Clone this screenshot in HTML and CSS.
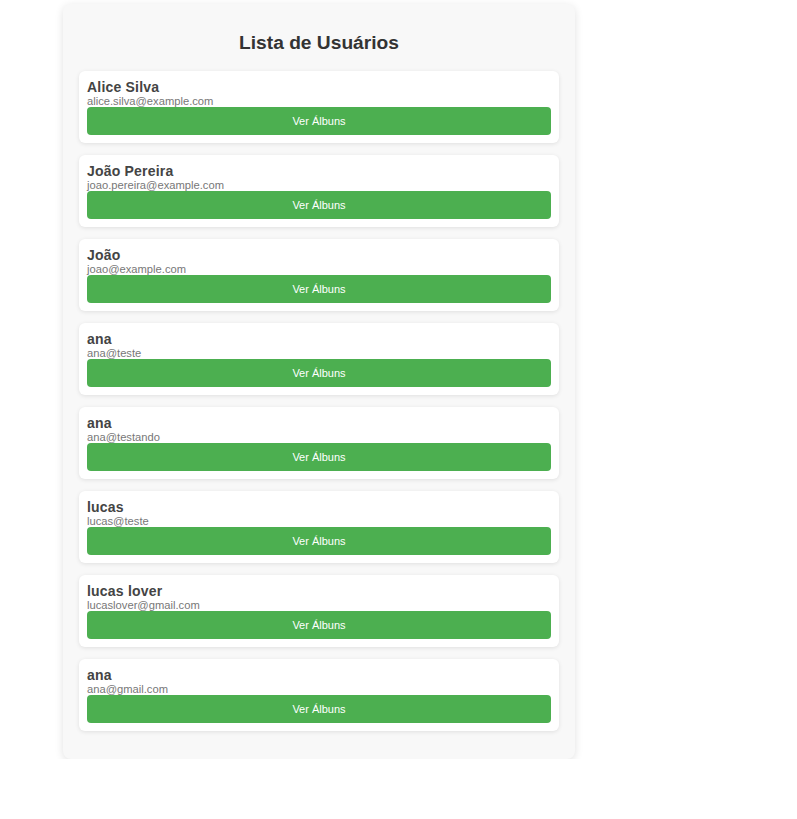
FILE: index.html
```html
<!DOCTYPE html>
<html lang="pt-BR">
<head>
<meta charset="utf-8">
<title>Lista de Usuários</title>
<link rel="stylesheet" href="styles.css">
</head>
<body>
<div class="container">
  <h2 class="title">Lista de Usuários</h2>
  <ul class="user-list">
    <li class="user-card"><div class="user-name">Alice Silva</div><div class="user-email">alice.silva@example.com</div><button class="btn">Ver Álbuns</button></li>
    <li class="user-card"><div class="user-name">João Pereira</div><div class="user-email">joao.pereira@example.com</div><button class="btn">Ver Álbuns</button></li>
    <li class="user-card"><div class="user-name">João</div><div class="user-email">joao@example.com</div><button class="btn">Ver Álbuns</button></li>
    <li class="user-card"><div class="user-name">ana</div><div class="user-email">ana@teste</div><button class="btn">Ver Álbuns</button></li>
    <li class="user-card"><div class="user-name">ana</div><div class="user-email">ana@testando</div><button class="btn">Ver Álbuns</button></li>
    <li class="user-card"><div class="user-name">lucas</div><div class="user-email">lucas@teste</div><button class="btn">Ver Álbuns</button></li>
    <li class="user-card"><div class="user-name">lucas lover</div><div class="user-email">lucaslover@gmail.com</div><button class="btn">Ver Álbuns</button></li>
    <li class="user-card"><div class="user-name">ana</div><div class="user-email">ana@gmail.com</div><button class="btn">Ver Álbuns</button></li>
  </ul>
</div>
</body>
</html>
```

FILE: styles.css
```css
html, body {
  margin: 0;
  padding: 0;
  background: #ffffff;
  font-family: "Liberation Sans", Arial, sans-serif;
}

.container {
  box-sizing: border-box;
  width: 512px;
  margin: 4px 0 0 63px;
  padding: 16px 16px 16px;
  background: #f8f8f8;
  border-radius: 8px;
  box-shadow: 0 2px 8px rgba(0, 0, 0, 0.12);
}

.title {
  margin: 12px 0 18px;
  font-size: 19.2px;
  line-height: 21px;
  font-weight: bold;
  color: #333333;
  text-align: center;
}

.user-list {
  list-style: none;
  margin: 0;
  padding: 0;
}

.user-card {
  display: flex;
  flex-direction: column;
  background: #ffffff;
  border-radius: 6px;
  padding: 8px;
  margin-bottom: 12px;
  box-shadow: 0 1px 4px rgba(0, 0, 0, 0.1);
}

.user-name {
  font-size: 14px;
  line-height: 17px;
  font-weight: bold;
  color: #444444;
  letter-spacing: 0.2px;
}

.user-email {
  font-size: 11.2px;
  line-height: 11px;
  color: #777777;
}

.btn {
  height: 28px;
  border: none;
  border-radius: 4px;
  background: #4caf50;
  color: #ffffff;
  font-family: "Liberation Sans", Arial, sans-serif;
  font-size: 11px;
  font-weight: normal;
  cursor: pointer;
}
```
